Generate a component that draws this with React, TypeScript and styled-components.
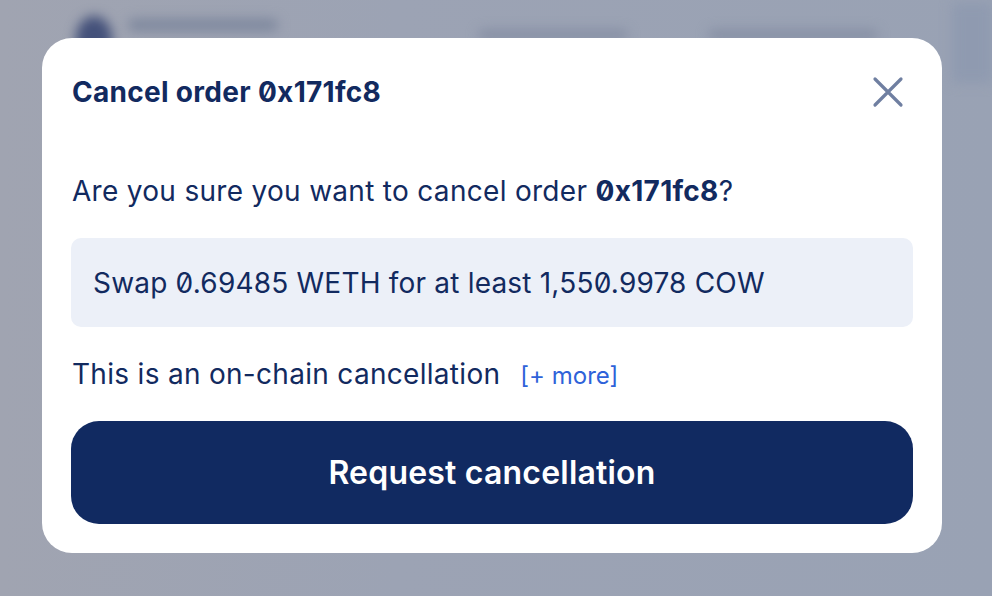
import React from "react";
import styled, { createGlobalStyle } from "styled-components";

const GlobalStyle = createGlobalStyle`
  html, body {
    margin: 0;
    padding: 0;
    width: 100%;
    height: 100%;
    overflow: hidden;
    background: #9ba3b4;
    font-family: Inter, "Noto Sans", sans-serif;
    font-feature-settings: "zero" 1;
  }
  * {
    box-sizing: border-box;
  }
`;

const Page = styled.div`
  position: relative;
  width: 992px;
  height: 596px;
  background: linear-gradient(90deg, #a0a4b1 0%, #9ca3b4 40%, #99a2b4 100%);
  overflow: hidden;
`;

const Header = styled.header`
  display: flex;
  align-items: center;
  height: 56px;
  padding: 0 0 0 76px;
  filter: blur(6px);
`;

const Logo = styled.div`
  width: 36px;
  height: 44px;
  border-radius: 50% 50% 20% 20%;
  background: #44517a;
  margin-top: 20px;
`;

const Brand = styled.div`
  width: 150px;
  height: 12px;
  border-radius: 6px;
  background: #7d879d;
  margin-left: 16px;
  margin-top: -6px;
`;

const NavItem = styled.div<{ $w: number; $ml: number }>`
  width: ${(p) => p.$w}px;
  height: 10px;
  border-radius: 5px;
  background: #858ea3;
  margin-left: ${(p) => p.$ml}px;
  margin-top: 14px;
`;

const SidePanel = styled.div`
  margin-left: auto;
  width: 40px;
  height: 80px;
  background: #8f9ab0;
  margin-top: 30px;
`;

const Overlay = styled.div`
  position: absolute;
  inset: 0;
  display: flex;
  align-items: flex-start;
  padding: 38px 0 0 42px;
`;

const Modal = styled.div`
  width: 900px;
  height: 515px;
  background: #ffffff;
  border-radius: 30px;
  padding: 30px 29px 29px 29px;
  display: flex;
  flex-direction: column;
  color: #122a5f;
  letter-spacing: 0.3px;
`;

const TitleRow = styled.div`
  display: flex;
  align-items: center;
  justify-content: space-between;
  height: 48px;
  padding-left: 1px;
`;

const Title = styled.h2`
  margin: 0;
  font-size: 28px;
  font-weight: 700;
`;

const CloseButton = styled.button`
  width: 40px;
  height: 40px;
  border: none;
  background: none;
  padding: 0;
  margin-right: 5px;
  display: flex;
  align-items: center;
  justify-content: center;
  cursor: pointer;
  color: #6f7fa1;
`;

const Question = styled.p`
  margin: 59px 0 0 1px;
  font-size: 28px;
  line-height: 32px;
  font-weight: 400;
  b {
    font-weight: 700;
  }
`;

const Summary = styled.div`
  margin-top: 31px;
  height: 89px;
  border-radius: 10px;
  background: #ecf0f8;
  display: flex;
  align-items: center;
  padding: 0 22px;
  font-size: 28px;
  font-weight: 400;
  letter-spacing: 0.2px;
`;

const InfoRow = styled.div`
  display: flex;
  align-items: baseline;
  gap: 20px;
  margin-top: 31px;
  padding-left: 1px;
  font-size: 28px;
  line-height: 32px;
`;

const MoreLink = styled.a`
  font-size: 24px;
  color: #2e62d9;
  cursor: pointer;
  text-decoration: none;
  letter-spacing: 0;
`;

const PrimaryButton = styled.button`
  margin-top: auto;
  height: 103px;
  width: 100%;
  border: none;
  border-radius: 28px;
  background: #112a61;
  color: #ffffff;
  font-family: Inter, "Noto Sans", sans-serif;
  font-size: 32px;
  font-weight: 600;
  letter-spacing: 0.2px;
  cursor: pointer;
`;

export default function App() {
  return (
    <>
      <GlobalStyle />
      <Page>
        <Header>
          <Logo />
          <Brand />
          <NavItem $w={150} $ml={200} />
          <NavItem $w={170} $ml={80} />
          <SidePanel />
        </Header>
        <Overlay>
          <Modal>
            <TitleRow>
              <Title>Cancel order 0x171fc8</Title>
              <CloseButton aria-label="Close">
                <svg width="32" height="32" viewBox="0 0 32 32" fill="none">
                  <path
                    d="M3 3 L29 29 M29 3 L3 29"
                    stroke="currentColor"
                    strokeWidth="3.2"
                    strokeLinecap="round"
                  />
                </svg>
              </CloseButton>
            </TitleRow>
            <Question>
              Are you sure you want to cancel order <b>0x171fc8</b>?
            </Question>
            <Summary>Swap 0.69485 WETH for at least 1,550.9978 COW</Summary>
            <InfoRow>
              <span>This is an on-chain cancellation</span>
              <MoreLink>[+ more]</MoreLink>
            </InfoRow>
            <PrimaryButton>Request cancellation</PrimaryButton>
          </Modal>
        </Overlay>
      </Page>
    </>
  );
}
